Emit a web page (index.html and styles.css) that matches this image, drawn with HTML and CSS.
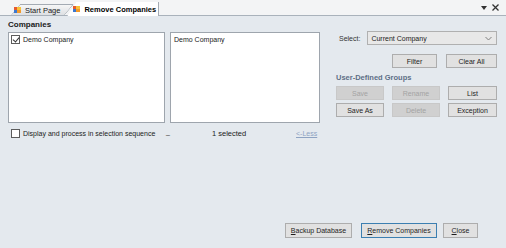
FILE: index.html
```html
<!DOCTYPE html>
<html lang="en">
<head>
    <meta charset="UTF-8">
    <title>Remove Companies</title>
    <link rel="stylesheet" href="styles.css">
</head>
<body>

<div class="window">
    <div class="tabbar">
        <div class="tabs">
            <div class="tab">
                <span class="tab-icon"></span>Start Page
            </div>
            <div class="tab active">
                <span class="tab-icon"></span>Remove Companies
            </div>
        </div>
        <div class="tab-tools">
            <svg width="6" height="4" viewBox="0 0 6 4"><path d="M0 0 H6 L3 4 Z" fill="#333"/></svg>
            <svg width="7" height="7" viewBox="0 0 7 7"><path d="M0.5 0.5 L6.5 6.5 M6.5 0.5 L0.5 6.5" stroke="#333" stroke-width="1.3"/></svg>
        </div>
    </div>

    <div class="panel">
        <div class="main">
            <div class="left">
                <h1 class="title">Companies</h1>
                <div class="lists">
                    <div class="listbox wide">
                        <label class="item"><span class="check on"></span>Demo Company</label>
                    </div>
                    <div class="listbox">
                        <div class="item plain">Demo Company</div>
                    </div>
                </div>
                <div class="list-footer">
                    <label class="item seq"><span class="check"></span>Display and process in selection sequence</label>
                    <span class="dash">_</span>
                    <span class="count">1 selected</span>
                    <a class="less" href="#">&lt;-Less</a>
                </div>
            </div>

            <div class="right">
                <div class="select-row">
                    <span class="select-label">Select:</span>
                    <div class="combo">
                        <span>Current Company</span>
                        <svg width="7" height="5" viewBox="0 0 7 5"><path d="M0.5 1 L3.5 4 L6.5 1" fill="none" stroke="#808080" stroke-width="1"/></svg>
                    </div>
                </div>
                <div class="filter-row">
                    <button class="btn">Filter</button>
                    <button class="btn">Clear All</button>
                </div>
                <div class="groups">
                    <div class="groups-title">User-Defined Groups</div>
                    <div class="group-grid">
                        <button class="btn" disabled>Save</button>
                        <button class="btn" disabled>Rename</button>
                        <button class="btn">List</button>
                        <button class="btn">Save As</button>
                        <button class="btn" disabled>Delete</button>
                        <button class="btn">Exception</button>
                    </div>
                </div>
            </div>
        </div>

        <div class="actions">
            <button class="btn"><u>B</u>ackup Database</button>
            <button class="btn default"><u>R</u>emove Companies</button>
            <button class="btn"><u>C</u>lose</button>
        </div>
    </div>
</div>

</body>
</html>
```

FILE: styles.css
```css
* {
    margin: 0;
    padding: 0;
    box-sizing: border-box;
}

html, body {
    width: 506px;
    height: 248px;
    overflow: hidden;
    font-family: "Liberation Sans", Arial, sans-serif;
    font-size: 7px;
    color: #1e1e1e;
    background: #e4e9ee;
}

.window {
    height: 100%;
    display: flex;
    flex-direction: column;
}

/* tab strip */
.tabbar {
    height: 16px;
    display: flex;
    justify-content: space-between;
    align-items: flex-end;
    background: #f3f4f5;
    border-bottom: 1px solid #a9b2bb;
    padding-left: 11px;
}

.tabs {
    display: flex;
    align-items: flex-end;
}

.tab {
    position: relative;
    height: 12px;
    display: flex;
    align-items: center;
    padding: 0 5px 0 3px;
    margin-bottom: -1px;
    color: #202020;
    font-size: 7.5px;
    white-space: nowrap;
    z-index: 1;
}

.tab::before {
    content: "";
    position: absolute;
    top: 0;
    bottom: 1px;
    left: 0;
    right: 0;
    background: linear-gradient(#f6f6f6, #dde0e3);
    border: 1px solid #a4abb3;
    border-bottom: none;
    border-radius: 0 2px 0 0;
    transform: skewX(-40deg);
    transform-origin: bottom left;
    z-index: -1;
}

.tab.active {
    height: 14px;
    font-weight: bold;
    color: #000;
    margin-left: 2px;
    padding: 0 3px 0 6px;
}

.tab.active::before {
    background: #fff;
    bottom: 0;
    transform: none;
    clip-path: polygon(0 100%, 9px 0, 100% 0, 100% 100%);
    border: none;
}

.tab.active::after {
    content: "";
    position: absolute;
    top: 0;
    right: 0;
    bottom: 0;
    width: 1px;
    background: #a4abb3;
}

.tab-icon {
    width: 7px;
    height: 6px;
    margin-right: 4px;
    background:
        linear-gradient(90deg, #e65a2e 0 50%, #f7c23b 50%) top / 100% 50% no-repeat,
        linear-gradient(90deg, #3c78d0 0 50%, #f39a2a 50%) bottom / 100% 50% no-repeat;
}

.tab-tools {
    display: flex;
    gap: 5px;
    align-items: center;
    height: 15px;
    padding-right: 7px;
}

/* content */
.panel {
    flex: 1;
    display: flex;
    flex-direction: column;
    padding: 3px 9px 10px 8px;
}

.main {
    display: flex;
    justify-content: space-between;
}

.title {
    font-size: 8px;
    font-weight: bold;
    color: #1a1a1a;
    height: 13px;
    line-height: 12px;
}

.lists {
    display: flex;
    gap: 5px;
}

.listbox {
    width: 150px;
    height: 91px;
    background: #fff;
    border: 1px solid #9ea5ad;
    padding: 2px;
}

.listbox.wide {
    width: 157px;
}

.item {
    display: flex;
    align-items: center;
    height: 9px;
    color: #222;
    white-space: nowrap;
}

.item.plain {
    padding-left: 1px;
}

.check {
    flex: none;
    width: 9px;
    height: 9px;
    border: 1px solid #5c5c5c;
    background: #fff;
    margin-right: 3px;
    position: relative;
}

.check.on::after {
    content: "";
    position: absolute;
    left: 2px;
    top: 0;
    width: 3px;
    height: 5px;
    border: solid #333;
    border-width: 0 1px 1px 0;
    transform: rotate(40deg);
}

.list-footer {
    display: flex;
    align-items: center;
    height: 20px;
    padding-left: 3px;
}

.seq {
    width: 155px;
}

.dash {
    width: 46px;
    color: #333;
    margin-top: -3px;
}

.count {
    width: 84px;
    color: #222;
    font-size: 7.5px;
}

.less {
    color: #8ea3c2;
    text-decoration: underline;
}

.right {
    width: 162px;
    padding-top: 12px;
}

.select-row {
    display: flex;
    align-items: center;
    gap: 7px;
    padding-left: 4px;
}

.select-label {
    color: #333;
}

.combo {
    flex: 1;
    height: 14px;
    display: flex;
    align-items: center;
    justify-content: space-between;
    padding: 0 4px 0 3px;
    background: #e8e8e8;
    border: 1px solid #b0b0b0;
    color: #222;
}

.filter-row {
    display: flex;
    justify-content: flex-end;
    gap: 9px;
    margin-top: 9px;
}

.filter-row .btn {
    width: 45px;
}

.filter-row .btn + .btn {
    width: 51px;
}

.btn {
    height: 14px;
    font-family: inherit;
    font-size: 7px;
    color: #1e1e1e;
    background: #e1e1e1;
    border: 1px solid #adadad;
    white-space: nowrap;
}

.btn:disabled {
    background: #d0d0d0;
    border-color: #c8c8c8;
    color: #a3a3a3;
}

.groups {
    margin-top: 5px;
    padding-left: 1px;
}

.groups-title {
    font-size: 7.5px;
    font-weight: bold;
    color: #5d6f86;
    height: 13px;
}

.group-grid {
    display: grid;
    grid-template-columns: 48px 48px 49px;
    grid-auto-rows: 14px;
    column-gap: 8px;
    row-gap: 3px;
}

.actions {
    margin-top: auto;
    display: flex;
    justify-content: flex-end;
    gap: 9px;
    padding-right: 19px;
}

.actions .btn {
    height: 15px;
    padding: 0 4px;
}

.actions .btn:nth-child(1) {
    width: 67px;
}

.actions .btn.default {
    width: 76px;
    border-color: #3c7fb1;
    margin-right: -3px;
}

.actions .btn:nth-child(3) {
    width: 35px;
}
```
